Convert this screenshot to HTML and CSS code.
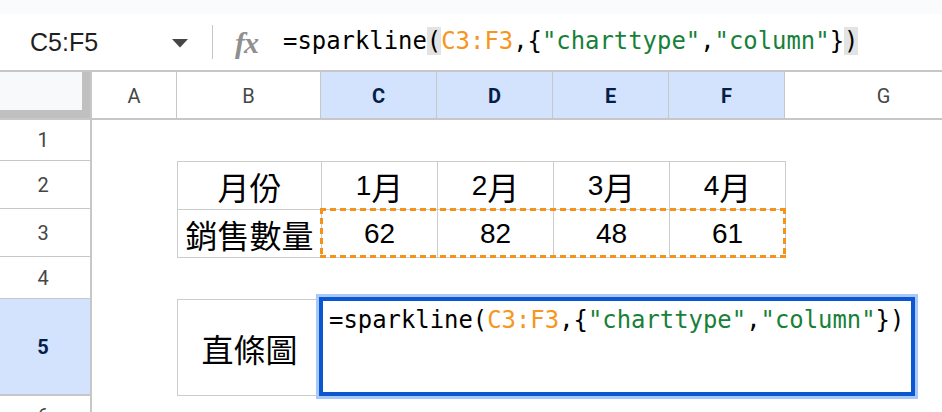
FILE: index.html
```html
<!DOCTYPE html>
<html lang="zh-Hant">
<head>
<meta charset="utf-8">
<title>sparkline</title>
<link rel="stylesheet" href="styles.css">
</head>
<body>
<div class="app">
  <div class="topstrip"></div>
  <div class="fbar">
    <div class="namebox">
      <span class="name">C5:F5</span>
      <svg class="caret" width="16" height="9" viewBox="0 0 16 9"><path d="M0 0 L16 0 L8 8.5 Z" fill="#444746"/></svg>
    </div>
    <div class="sep"></div>
    <div class="fx">fx</div>
    <div class="formula mono">=sparkline<span class="paren">(</span><span class="o">C3:F3</span>,{<span class="g">"charttype"</span>,<span class="g">"column"</span>}<span class="paren">)</span></div>
  </div>
  <div class="sheet">
    <div class="corner"></div>
    <div class="ch">A</div>
    <div class="ch">B</div>
    <div class="ch sel">C</div>
    <div class="ch sel">D</div>
    <div class="ch sel">E</div>
    <div class="ch sel">F</div>
    <div class="ch">G</div>

    <div class="rh r1">1</div>
    <div class="rh r2">2</div>
    <div class="rh r3">3</div>
    <div class="rh r4">4</div>
    <div class="rh r5 sel">5</div>
    <div class="rh r6">6</div>

    <div class="tbl">
      <div class="cell"><span class="cjk">月份</span></div>
      <div class="cell">1<span class="cjk">月</span></div>
      <div class="cell">2<span class="cjk">月</span></div>
      <div class="cell">3<span class="cjk">月</span></div>
      <div class="cell">4<span class="cjk">月</span></div>
      <div class="cell"><span class="cjk">銷售數量</span></div>
      <div class="cell">62</div>
      <div class="cell">82</div>
      <div class="cell">48</div>
      <div class="cell">61</div>
    </div>
    <div class="ants"></div>

    <div class="b5"><span class="cjk">直條圖</span></div>
    <div class="editor mono">=sparkline(<span class="o">C3:F3</span>,{<span class="g">"charttype"</span>,<span class="g">"column"</span>})</div>
  </div>
</div>
</body>
</html>
```
FILE: styles.css
```css
* { box-sizing: border-box; }
html, body { margin: 0; padding: 0; background: #fff; }
body { width: 942px; height: 412px; overflow: hidden; font-family: Roboto, "Liberation Sans", "Noto Sans CJK TC", sans-serif; }

.app { display: flex; flex-direction: column; width: 942px; height: 412px; }

.topstrip { height: 14px; background: #f9fbfd; flex: none; }

.fbar {
  height: 58px; flex: none;
  display: flex; align-items: center;
  border-bottom: 2px solid #c7c7c7;
  background: #fff;
}
.namebox {
  width: 212px; height: 100%;
  display: flex; align-items: center; justify-content: space-between;
  padding: 0 24px 0 30px;
}
.name { font-family: "Liberation Sans", Arial, sans-serif; font-size: 25px; color: #1f1f1f; }
.caret { display: block; margin-top: 2px; }
.sep { width: 1px; height: 34px; background: #c7c7c7; }
.fx {
  margin-left: 22px; width: 29px;
  font-family: "Liberation Serif", "Times New Roman", serif;
  font-style: italic; font-weight: bold; font-size: 30px; color: #8f8f8f;
  letter-spacing: -1px; line-height: 1; margin-top: 2px;
}
.mono { font-family: "DejaVu Sans Mono", "Liberation Mono", monospace; font-size: 23.9px; color: #000; white-space: nowrap; }
.formula { margin-left: 19px; line-height: 27px; margin-top: -2px; }
.paren { background: #e3e3e3; }
.o { color: #f6961e; }
.g { color: #188038; }

.sheet {
  flex: 1;
  display: grid;
  grid-template-columns: 92px 85px 144px 116px 116px 116px 116px 198px;
  grid-template-rows: 48px 41px 48px 48px 42px 97px 40px;
  overflow: hidden;
}

.corner {
  grid-column: 1; grid-row: 1;
  background: #f8f9fa;
  border-right: 2px solid #c7c7c7;
  border-bottom: 2px solid #c7c7c7;
  box-shadow: inset -8px -8px 0 0 #c0c0c0;
}
.ch {
  grid-row: 1;
  display: flex; align-items: center; justify-content: center;
  border-right: 1px solid #c7c7c7;
  border-bottom: 2px solid #c7c7c7;
  font-size: 20px; color: #444746;
  padding-top: 1px;
}
.ch.sel { background: #d3e3fd; color: #041e49; font-weight: bold; }
.rh {
  grid-column: 1;
  display: flex; align-items: center; justify-content: center;
  border-right: 2px solid #c7c7c7;
  border-bottom: 1px solid #c7c7c7;
  font-size: 20px; color: #444746;
  padding-right: 4px;
}
.rh.sel { background: #d3e3fd; color: #041e49; font-weight: bold; border-bottom-width: 2px; }
.r1 { grid-row: 2; }
.r2 { grid-row: 3; }
.r3 { grid-row: 4; }
.r4 { grid-row: 5; }
.r5 { grid-row: 6; }
.r6 { grid-row: 7; align-items: flex-start; padding-top: 8px; }

.tbl {
  grid-column: 3 / 8; grid-row: 3 / 5;
  align-self: start; justify-self: start;
  display: grid;
  grid-template-columns: 143px 115px 115px 115px 115px;
  grid-template-rows: 47px 47px;
  gap: 1px; padding: 1px;
  background: #cccccc;
  font-family: "Liberation Sans", Arial, "Noto Sans CJK TC", sans-serif;
  font-size: 28px; color: #000;
}
.cell {
  background: #fff;
  display: flex; align-items: center; justify-content: center;
  line-height: 1;
}
.cjk { font-family: "Noto Sans CJK TC", sans-serif; font-size: 32px; }

.ants {
  grid-column: 4 / 8; grid-row: 4;
  margin: -1px;
  background:
    repeating-linear-gradient(90deg, #f5921a 0 6px, transparent 6px 10px) left top / 100% 3px no-repeat,
    repeating-linear-gradient(90deg, #f5921a 0 6px, transparent 6px 10px) left bottom / 100% 3px no-repeat,
    repeating-linear-gradient(180deg, #f5921a 0 6px, transparent 6px 10px) left top / 3px 100% no-repeat,
    repeating-linear-gradient(180deg, #f5921a 0 6px, transparent 6px 10px) right top / 3px 100% no-repeat;
}

.b5 {
  grid-column: 3; grid-row: 6;
  border: 1px solid #cccccc;
  border-right: none;
  display: flex; align-items: center; justify-content: center;
  color: #000;
}

.editor {
  grid-column: 4 / 9; grid-row: 6;
  justify-self: start; align-self: start;
  width: 596px; height: 99px;
  margin: -2px 0 0 -2px;
  border: 4px solid #0b57d0;
  box-shadow: 0 0 0 3px #a8c7fa;
  background: #fff;
  padding: 5px 0 0 6px;
  line-height: 28px;
}
```
